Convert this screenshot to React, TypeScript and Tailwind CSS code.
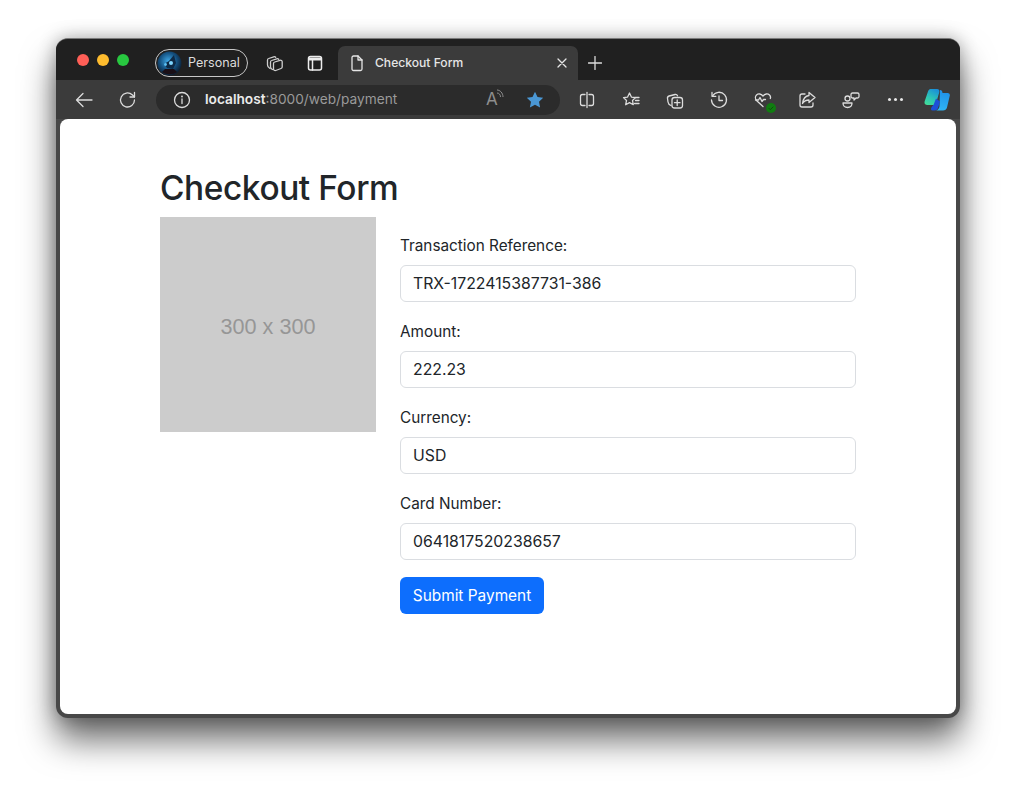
import { ReactNode } from "react";

const stroke = {
  fill: "none",
  stroke: "currentColor",
  strokeWidth: 1.3,
  strokeLinecap: "round" as const,
  strokeLinejoin: "round" as const,
};

function Icon({ size = 20, children }: { size?: number; children: ReactNode }) {
  return (
    <svg width={size} height={size} viewBox="0 0 20 20" {...stroke}>
      {children}
    </svg>
  );
}

function ToolSlot({ children }: { children: ReactNode }) {
  return (
    <div className="flex h-full w-[44px] shrink-0 items-center justify-center text-[#dcdcdc]">
      {children}
    </div>
  );
}

function Field({ label, value }: { label: string; value: string }) {
  return (
    <div className="mb-[18px]">
      <label className="mb-[9px] block text-[15.3px] leading-[24px] text-[#212529]">
        {label}
      </label>
      <input
        readOnly
        value={value}
        className="-mt-[2px] block h-[37px] w-full rounded-[6px] border border-[#dadde1] bg-white px-3 text-[15.8px] text-[#212529] outline-none"
      />
    </div>
  );
}

function TitleBar() {
  return (
    <div className="flex h-[41px] shrink-0 items-center bg-[#202020] pt-[7px] pl-[21px]">
      <div className="mb-[6px] flex gap-2">
        <div className="h-3 w-3 rounded-full bg-[#ff5f57]" />
        <div className="h-3 w-3 rounded-full bg-[#febc2e]" />
        <div className="h-3 w-3 rounded-full bg-[#28c840]" />
      </div>
      <div className="ml-[26px] flex h-[28px] w-[93px] items-center rounded-full border border-[#c8c8c8] pl-[1px] text-[12.6px] text-[#dcdcdc]">
        <svg width="25" height="25" viewBox="0 0 25 25">
          <defs>
            <radialGradient id="avatar" cx="0.45" cy="0.4" r="0.65">
              <stop offset="0" stopColor="#3fa9e8" />
              <stop offset="0.55" stopColor="#14507f" />
              <stop offset="1" stopColor="#0c1422" />
            </radialGradient>
          </defs>
          <circle cx="12.5" cy="12.5" r="12" fill="url(#avatar)" />
          <path d="M7 13l5-3 5-6 2 8-3 6-6-1z" fill="#0e2a46" />
          <circle cx="14" cy="12" r="2" fill="#7fd6ff" />
          <circle cx="8.500" cy="13.500" r="1.400" fill="#5cc0f5" />
          <path d="M5 21c4 3 11 3 15 0l-3-3H8z" fill="#1a0f16" />
        </svg>
        <span className="ml-[6px]">Personal</span>
      </div>
      <div className="ml-[7px] flex h-full w-[40px] items-center justify-center text-[#cfcfcf]">
        <Icon>
          <path d="M5 15.500c-1.500-.8-2.500-2-2.500-3.500V7c0-.8.500-1.300 1.200-1.500l5-1.700c.8-.2 1.500 0 2 .5" />
          <path d="M7.500 16.500C6.300 16 5.500 15 5.500 13.700V9c0-.8.500-1.300 1.200-1.500l5-1.700c.8-.2 1.500 0 2 .5" />
          <path d="M8.500 10.500c0-.8.500-1.300 1.200-1.500l5.300-1.700c1-.3 2.200.4 2.200 1.500V14c0 .8-.5 1.300-1.200 1.500L10.700 17.500c-1 .3-2.200-.4-2.200-1.500z" />
        </Icon>
      </div>
      <div className="flex h-full w-[40px] items-center justify-center text-[#ececec]">
        <Icon>
          <rect x="3.500" y="3.500" width="13" height="13.500" rx="2" strokeWidth="1.500" />
          <path d="M3.500 6h13" strokeWidth="2.800" strokeLinecap="butt" />
          <path d="M7.500 7v10" strokeWidth="1.500" />
        </Icon>
      </div>
      <div className="ml-[3px] flex h-full w-[240px] items-center rounded-t-[7px] bg-[#3b3b3b] pr-[11px] pl-[9px] text-[#e6e6e6]">
        <Icon>
          <path d="M5 4.500C5 3.700 5.700 3 6.500 3H11l4 4v9c0 .8-.7 1.500-1.500 1.500h-7C5.700 17.500 5 16.800 5 16z" />
          <path d="M11 3v4h4" />
        </Icon>
        <span className="ml-2 flex-1 text-[12.1px] font-medium">Checkout Form</span>
        <svg width="10" height="10" viewBox="0 0 10 10" {...stroke}>
          <path d="M1 1l8 8M9 1l-8 8" />
        </svg>
      </div>
      <div className="flex h-full w-[34px] items-center justify-center text-[#dcdcdc]">
        <svg width="14" height="14" viewBox="0 0 14 14" {...stroke}>
          <path d="M7 .5v13M.5 7h13" />
        </svg>
      </div>
    </div>
  );
}

function Toolbar() {
  return (
    <div className="flex h-[39px] shrink-0 items-center bg-[#3b3b3b] pl-[6px]">
      <ToolSlot>
        <svg width="18" height="16" viewBox="0 0 18 16" {...stroke}>
          <path d="M17 8H1.500M8 1.500L1.500 8 8 14.500" />
        </svg>
      </ToolSlot>
      <ToolSlot>
        <Icon>
          <path d="M16.500 10a7 7 0 1 1-2.300-5.200L16.500 7" />
          <path d="M16.500 2.500V7H12" />
        </Icon>
      </ToolSlot>
      <div className="ml-[6px] flex h-[30px] w-[404px] items-center rounded-full bg-[#2b2b2b] pl-[16px]">
        <div className="text-[#dcdcdc]">
          <Icon>
            <circle cx="10" cy="10" r="7.500" />
            <path d="M10 9v4.500" />
            <path d="M10 6.300v.2" strokeWidth="1.800" />
          </Icon>
        </div>
        <div className="ml-[13px] flex-1 text-[13.7px] text-[#9a9a9a]">
          <span className="font-semibold text-[#ececec]">localhost</span>:8000/web/payment
        </div>
        <div className="relative mr-[20px] w-[20px] text-[17px] leading-none text-[#8e8e8e]">
          A
          <svg className="absolute top-[-2px] left-[10px]" width="9" height="9" viewBox="0 0 9 9" fill="none" stroke="currentColor" strokeWidth="1">
            <path d="M1 1c3 0 6 3 6 7M1 4c2 0 3.500 1.500 3.500 4" />
          </svg>
        </div>
        <svg className="mr-[16px]" width="18" height="18" viewBox="0 0 18 18">
          <path d="M9 .8l2.500 5.300 5.700.7-4.200 4 1.100 5.800L9 13.800l-5.100 2.800L5 10.800.8 6.800l5.700-.7z" fill="#4a97d4" />
        </svg>
      </div>
      <div className="ml-[5px] flex h-full">
        <ToolSlot>
          <Icon>
            <path d="M8 4.500H5.500c-1.200 0-2 .8-2 2v7c0 1.200.8 2 2 2H8M12 4.500h2.500c1.200 0 2 .8 2 2v7c0 1.200-.8 2-2 2H12" />
            <path d="M10 2.500v15" />
          </Icon>
        </ToolSlot>
        <ToolSlot>
          <Icon>
            <path d="M8.500 3l1.900 4.100 4.100.5-3 2.900.8 4.200-3.800-2.100-3.800 2.100.8-4.200-3-2.900 4.100-.5z" />
            <path d="M14 7.500h4M14.500 10.500H18M13.500 13.500H18" />
          </Icon>
        </ToolSlot>
        <ToolSlot>
          <Icon>
            <path d="M6 15.500c-1.500-.5-2.800-2-3-3.500l-.5-3.500c-.2-1.200.5-2.200 1.600-2.500l6-1.500c1-.2 2 .3 2.400 1.300" />
            <rect x="7" y="7.500" width="10.500" height="10.500" rx="2.500" />
            <path d="M12.200 10v5.500M9.500 12.700h5.500" />
          </Icon>
        </ToolSlot>
        <ToolSlot>
          <Icon>
            <path d="M3.500 6A7.500 7.500 0 1 1 2.500 10" />
            <path d="M3 2.500V6.300h3.800" />
            <path d="M10 6v4.500h3.500" />
          </Icon>
        </ToolSlot>
        <ToolSlot>
          <div className="relative">
            <Icon>
              <path d="M10 16.500l-6-5.500C2 9 2 6.500 3.500 5c1.700-1.500 4.500-1.500 6.500 1 2-2.500 4.800-2.500 6.500-1 1 1 1.200 2.500.8 3.500" />
              <path d="M2.500 10h3l1.500-2.500 2 4 1.500-2h2" />
            </Icon>
            <svg className="absolute right-[-3px] bottom-[-3px]" width="10" height="10" viewBox="0 0 10 10">
              <circle cx="5" cy="5" r="5" fill="#107c10" />
              <path d="M2.800 5.200l1.500 1.500 3-3" fill="none" stroke="#0b4f0b" strokeWidth="1" />
            </svg>
          </div>
        </ToolSlot>
        <ToolSlot>
          <Icon>
            <path d="M8 4H5c-1.200 0-2 .8-2 2v9c0 1.200.8 2 2 2h9c1.200 0 2-.8 2-2v-2" />
            <path d="M12 2.500l6 5-6 5V10c-3 0-5 1-6.500 3.500C6 9.500 8.500 6 12 5.500z" />
          </Icon>
        </ToolSlot>
        <ToolSlot>
          <Icon>
            <circle cx="6.500" cy="8.500" r="2.500" />
            <path d="M2 13h9c0 2.800-1.800 4.500-4.500 4.500S2 15.800 2 13z" />
            <path d="M11.500 3h5c1 0 1.500.6 1.500 1.500v2c0 1-.6 1.500-1.500 1.500H15l-2 2V8h-1.500c-1 0-1.500-.5-1.500-1.500v-2C10 3.500 10.500 3 11.500 3z" />
          </Icon>
        </ToolSlot>
        <ToolSlot>
          <div className="flex gap-[3px]">
            <div className="h-[3px] w-[3px] rounded-full bg-[#e8e8e8]" />
            <div className="h-[3px] w-[3px] rounded-full bg-[#e8e8e8]" />
            <div className="h-[3px] w-[3px] rounded-full bg-[#e8e8e8]" />
          </div>
        </ToolSlot>
        <div className="flex h-full w-[40px] shrink-0 items-center justify-center">
          <svg width="26" height="23" viewBox="0 0 26 23">
            <defs>
              <linearGradient id="copilotA" x1="0.7" y1="0" x2="0.2" y2="1">
                <stop offset="0" stopColor="#1a8fd8" />
                <stop offset="0.55" stopColor="#2cc4b8" />
                <stop offset="1" stopColor="#42dc98" />
              </linearGradient>
              <linearGradient id="copilotB" x1="0.6" y1="0" x2="0.4" y2="1">
                <stop offset="0" stopColor="#1f8fe8" />
                <stop offset="1" stopColor="#2fb4f4" />
              </linearGradient>
            </defs>
            <path d="M6.500 1H13c2 0 2.800 1.500 2.200 3.500L11.500 17H3.500C1.200 17 0 15.500.6 13.500L4 3.500C4.500 2 5.300 1 6.500 1z" fill="url(#copilotA)" />
            <path d="M16 2c1.500 0 2.500 1.200 2.500 3H23.500c1.700 0 2.700 1.300 2.200 3L23 19.500c-.5 2-2 3-4 3H12c2-.5 3-2 3.500-4z" fill="url(#copilotB)" />
            <path d="M12 10.500l4 3-1.500 5c-.6 2.400-1.800 4-4 4H8.500c-1.800 0-2-2-.8-3.500l2-2.500z" fill="#1d4fd8" />
          </svg>
        </div>
      </div>
    </div>
  );
}

export default function App() {
  return (
    <div className="h-[792px] w-[1016px] overflow-hidden bg-white pt-[38px] pl-[56px] font-['Inter',sans-serif]">
      <div className="flex h-[680px] w-[904px] flex-col overflow-hidden rounded-[12px] border-t border-[#7a7a7a] bg-[#484848] shadow-[0_22px_34px_rgba(0,0,0,0.58),0_0_18px_rgba(0,0,0,0.3)]">
        <TitleBar />
        <Toolbar />
        <div className="mx-[4px] mb-[4px] flex-1 rounded-[8px] bg-white pt-[48px] pl-[100px]">
          <h1 className="mb-[7px] text-[33.4px] leading-[43px] font-medium tracking-[-0.4px] text-[#212529]">
            Checkout Form
          </h1>
          <div className="flex gap-[24px]">
            <div className="flex h-[215px] w-[216px] shrink-0 items-center justify-center bg-[#cccccc] pt-[6px] font-['Liberation_Sans',sans-serif] text-[21.6px] text-[#969696]">
              300 x 300
            </div>
            <div className="w-[456px] pt-[17px]">
              <Field label="Transaction Reference:" value="TRX-1722415387731-386" />
              <Field label="Amount:" value="222.23" />
              <Field label="Currency:" value="USD" />
              <Field label="Card Number:" value="0641817520238657" />
              <button className="-mt-px h-[37px] w-[144px] rounded-[6px] bg-[#0d6efd] text-[15.4px] text-white">
                Submit Payment
              </button>
            </div>
          </div>
        </div>
      </div>
    </div>
  );
}
